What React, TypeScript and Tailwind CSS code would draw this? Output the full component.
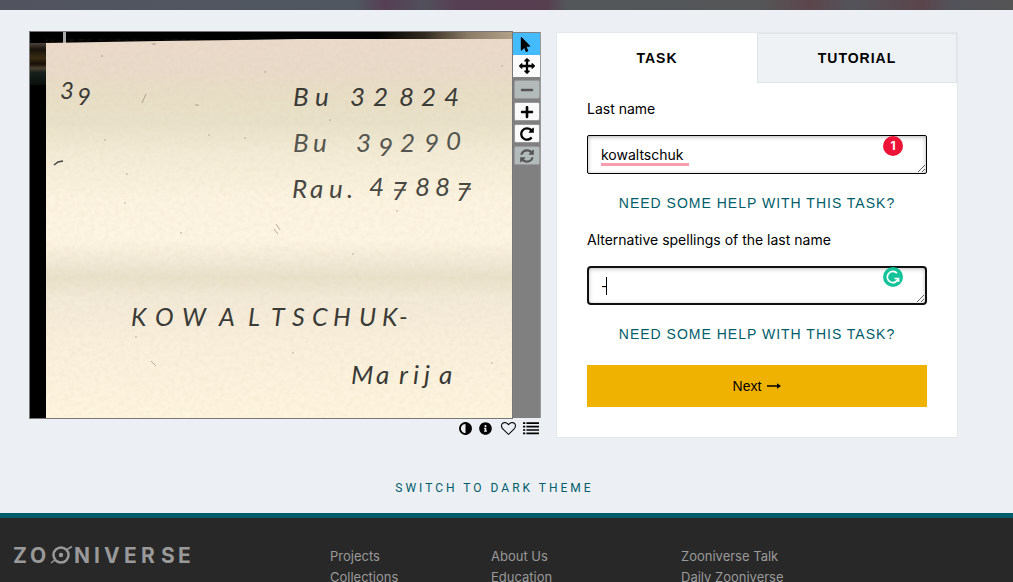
import React, { useState } from 'react';
import {
    FaFacebookF,
    FaGooglePlusG,
    FaInfoCircle,
    FaMinus,
    FaMousePointer,
    FaPlus,
    FaTwitter,
} from 'react-icons/fa';

const icons = {
    move: 'M1792 896q0 26-19 45l-256 256q-19 19-45 19t-45-19-19-45v-128h-384v384h128q26 0 45 19t19 45-19 45l-256 256q-19 19-45 19t-45-19l-256-256q-19-19-19-45t19-45 45-19h128v-384h-384v128q0 26-19 45t-45 19-45-19l-256-256q-19-19-19-45t19-45l256-256q19-19 45-19t45 19 19 45v128h384v-384h-128q-26 0-45-19t-19-45 19-45l256-256q19-19 45-19t45 19l256 256q19 19 19 45t-19 45-45 19h-128v384h384v-128q0-26 19-45t45-19 45 19l256 256q19 19 19 45z',
    rotate: 'M1664 256v448q0 26-19 45t-45 19h-448q-42 0-59-40-17-39 14-69l138-138q-148-137-349-137-104 0-198.5 40.5t-163.5 109.5-109.5 163.5-40.5 198.5 40.5 198.5 109.5 163.5 163.5 109.5 198.5 40.5q119 0 225-52t179-147q7-10 23-12 15 0 25 9l137 138q9 8 9.5 20.5t-7.5 22.5q-109 132-264 204.5t-327 72.5q-156 0-298-61t-245-164-164-245-61-298 61-298 164-245 245-164 298-61q147 0 284.5 55.5t244.5 156.5l130-129q29-31 70-14 39 17 39 59z',
    refresh:
        'M1639 1056q0 5-1 7-64 268-268 434.5t-478 166.5q-146 0-282.5-55t-243.5-157l-129 129q-19 19-45 19t-45-19-19-45v-448q0-26 19-45t45-19h448q26 0 45 19t19 45-19 45l-137 137q71 66 161 102t187 36q134 0 250-65t186-179q11-17 53-117 8-23 30-23h192q13 0 22.5 9.5t9.5 22.5zm25-800v448q0 26-19 45t-45 19h-448q-26 0-45-19t-19-45 19-45l138-138q-148-137-349-137-134 0-250 65t-186 179q-11 17-53 117-8 23-30 23h-199q-13 0-22.5-9.5t-9.5-22.5v-7q65-268 270-434.5t480-166.5q146 0 284 55.5t245 156.5l130-129q19-19 45-19t45 19 19 45z',
    contrast:
        'M896 1440v-1088q-148 0-273 73t-198 198-73 273 73 273 198 198 273 73zm768-544q0 209-103 385.5t-279.5 279.5-385.5 103-385.5-103-279.5-279.5-103-385.5 103-385.5 279.5-279.5 385.5-103 385.5 103 279.5 279.5 103 385.5z',
    heart: 'M1664 596q0-81-21.5-143t-55-98.5-81.5-59.5-94-31-98-8-112 25.5-110.5 64-86.5 72-60 61.5q-18 22-49 22t-49-22q-24-28-60-61.5t-86.5-72-110.5-64-112-25.5-98 8-94 31-81.5 59.5-55 98.5-21.5 143q0 168 187 355l581 560 580-559q188-188 188-356zm128 0q0 221-229 450l-623 600q-18 18-44 18t-44-18l-624-602q-10-8-27.5-26t-55.5-65.5-68-97.5-53.5-121-23.5-138q0-220 127-344t351-124q62 0 126.5 21.5t120 58 95.5 68.5 76 68q36-36 76-68t95.5-68.5 120-58 126.5-21.5q224 0 351 124t127 344z',
    list: 'M0 256h256v192H0zM0 640h256v192H0zM0 1024h256v192H0zM0 1408h256v192H0zM384 256h1408v192H384zM384 640h1408v192H384zM384 1024h1408v192H384zM384 1408h1408v192H384z',
};

function Icon({ name, className }: { name: keyof typeof icons; className: string }) {
    return (
        <svg viewBox="0 0 1792 1792" fill="currentColor" className={className}>
            <path d={icons[name]} />
        </svg>
    );
}

// Specks on the card: x, y, length
const specks = [
    [72, 24, 1],
    [124, 12, 2],
    [167, 73, 2],
    [179, 103, 1],
    [215, 106, 1],
    [75, 108, 1],
    [97, 142, 1],
    [95, 171, 1],
    [151, 201, 1],
    [106, 305, 1],
    [235, 40, 1],
    [300, 88, 1],
    [367, 179, 1],
    [323, 222, 1],
    [462, 331, 1],
    [263, 321, 1],
    [472, 34, 1],
];

function CardScan() {
    return (
        <svg viewBox="0 0 482 386" className="block w-full" role="img" aria-label="Index card">
            <defs>
                <linearGradient id="paper" x1="0" y1="0" x2="0" y2="1">
                    <stop offset="0" stopColor="#ebdaca" />
                    <stop offset="0.08" stopColor="#e9dac9" />
                    <stop offset="0.15" stopColor="#e8dec6" />
                    <stop offset="0.22" stopColor="#e8e1c9" />
                    <stop offset="0.3" stopColor="#f3ebd5" />
                    <stop offset="0.42" stopColor="#fcf3e0" />
                    <stop offset="0.53" stopColor="#fdf4e2" />
                    <stop offset="0.6" stopColor="#efe7d3" />
                    <stop offset="0.63" stopColor="#e9e1ca" />
                    <stop offset="0.68" stopColor="#f2e9d7" />
                    <stop offset="0.8" stopColor="#f9efdb" />
                    <stop offset="1" stopColor="#fef5df" />
                </linearGradient>
                <linearGradient id="edge" x1="0" y1="0" x2="1" y2="0">
                    <stop offset="0.72" stopColor="#000" />
                    <stop offset="0.82" stopColor="#332a20" />
                    <stop offset="0.91" stopColor="#8b7c68" />
                    <stop offset="1" stopColor="#b2a187" />
                </linearGradient>
                <linearGradient id="fringe" x1="0" y1="0" x2="0" y2="1">
                    <stop offset="0" stopColor="#4b443d" />
                    <stop offset="0.15" stopColor="#17120c" />
                    <stop offset="0.35" stopColor="#3a2b12" />
                    <stop offset="0.5" stopColor="#171008" />
                    <stop offset="0.6" stopColor="#4a4030" />
                    <stop offset="0.7" stopColor="#17201b" />
                    <stop offset="1" stopColor="#0a0f0c" />
                </linearGradient>
                <filter id="grain" x="0" y="0" width="1" height="1">
                    <feTurbulence type="fractalNoise" baseFrequency="0.2" numOctaves="3" />
                    <feColorMatrix values="0 0 0 0 0.6  0 0 0 0 0.5  0 0 0 0 0.3  0.5 0 0 0 -0.18" />
                </filter>
            </defs>
            <rect width="482" height="386" fill="#000" />
            <rect width="482" height="14" fill="url(#edge)" />
            <rect y="11" width="16" height="42" fill="url(#fringe)" />
            <rect x="33" width="3" height="12" fill="#aaa" />
            <path d="M16 11 130 9 270 7H482V386H16Z" fill="url(#paper)" />
            <path d="M16 11 130 9 270 7H482V386H16Z" filter="url(#grain)" opacity="0.4" />
            {specks.map(([x, y, r]) => (
                <ellipse key={`${x}-${y}`} cx={x} cy={y} rx={r} ry="1" fill="#8d8069" opacity="0.4" />
            ))}
            <path d="M24 133l4-3 5-1" fill="none" stroke="#444" strokeWidth="1.5" />
            <path d="M112 71l4-9M121 329l5 5M246 192l4 6M244 197l4 5" fill="none" stroke="#8a7c6c" opacity="0.6" />
            <g className="font-['Lato','Liberation_Sans',sans-serif] italic" fill="#3a3a36">
                <text x="30 47" y="67 73" fontSize="24">
                    39
                </text>
                <text x="263 285 320 343 369 391 414" y="74" fontSize="26">
                    Bu32824
                </text>
                <text x="263 283 326 348 370 394 416" y="120 120 120 124 120 120 118" fontSize="26" fill="#565650">
                    Bu39290
                </text>
                <text
                    x="262 280 299 317 339 362 385 405 426"
                    y="166 166 166 166 164 168 164 164 169"
                    fontSize="26"
                    fill="#484843"
                >
                    Rau.47887
                </text>
                <path d="M364 158h12M429 157h12" fill="none" stroke="#484843" strokeWidth="1.5" />
                <text x="101 125 152 189 218 241 262 282 303 329 352 369" y="294" fontSize="25">
                    KOWALTSCHUK-
                </text>
                <text x="321 346 369 383 394 409" y="352" fontSize="26">
                    Marija
                </text>
            </g>
        </svg>
    );
}

function ImageToolbar() {
    const button = 'flex h-[19px] w-[26px] items-center justify-center rounded-xs border border-[#999]';

    return (
        <div className="mt-px mb-px flex w-7 flex-col items-center gap-[3px] border-r border-[#999] bg-[#808080] pt-px">
            <div className="flex flex-col">
                <button aria-label="Annotate" className="flex h-[22px] w-[27px] items-center justify-center bg-[#43bbfd]">
                    <FaMousePointer className="mr-[3px] h-[15px] w-[15px]" />
                </button>
                <button aria-label="Move" className="flex h-[22px] w-[27px] items-center justify-center bg-[#fafafa]">
                    <Icon name="move" className="h-4 w-4" />
                </button>
            </div>
            <button disabled aria-label="Zoom out" className={`${button} bg-[#b3baba] text-[#555]`}>
                <FaMinus className="h-[14px] w-[14px]" />
            </button>
            <button aria-label="Zoom in" className={`${button} bg-[#fafafa]`}>
                <FaPlus className="h-[14px] w-[14px]" />
            </button>
            <button aria-label="Rotate" className={`${button} bg-[#fafafa]`}>
                <Icon name="rotate" className="h-4 w-4" />
            </button>
            <button disabled aria-label="Reset" className={`${button} bg-[#b3baba] text-[#555]`}>
                <Icon name="refresh" className="h-4 w-4" />
            </button>
        </div>
    );
}

function HelpButton() {
    return (
        <button className="block w-full text-center font-['Liberation_Sans',Arial,sans-serif] text-sm leading-5 tracking-[1px] text-[#005d69]">
            NEED SOME HELP WITH THIS TASK?
        </button>
    );
}

function TaskPanel() {
    const [lastName, setLastName] = useState('kowaltschuk');
    const [spellings, setSpellings] = useState('-');

    return (
        <section className="mt-px w-[402px] shrink-0 border border-[#e4e8eb] bg-white">
            <div
                role="tablist"
                className="grid h-[50px] grid-cols-2 font-['Liberation_Sans',Arial,sans-serif] text-sm font-bold tracking-[1px]"
            >
                <button role="tab" aria-selected="true">
                    TASK
                </button>
                <button role="tab" aria-selected="false" className="border border-[#dfe4e8] bg-[#eef2f5]">
                    TUTORIAL
                </button>
            </div>

            <div className="px-[30px] pt-4 pb-[30px]">
                <label htmlFor="lastName" className="block text-sm leading-5">
                    Last name
                </label>
                <div className="relative mt-4">
                    <textarea
                        id="lastName"
                        rows={1}
                        spellCheck={false}
                        value={lastName}
                        onChange={(e) => setLastName(e.target.value)}
                        className="block h-[39px] w-full overflow-hidden rounded-xs border border-black px-[13px] py-[9px] text-sm leading-5 shadow-[inset_0_1px_4px_rgba(0,0,0,0.3)] outline-none"
                    />
                    <span className="absolute top-[28px] left-[14px] h-[3px] w-[88px] bg-[#f79bae]" />
                    <span className="absolute top-px right-6 flex h-5 w-5 items-center justify-center rounded-full bg-[#ec1337] text-xs font-bold text-white">
                        1
                    </span>
                </div>
                <div className="mt-[19px]">
                    <HelpButton />
                </div>

                <label htmlFor="spellings" className="mt-[17px] block text-sm leading-5">
                    Alternative spellings of the last name
                </label>
                <div className="relative mt-4">
                    <textarea
                        id="spellings"
                        rows={1}
                        spellCheck={false}
                        value={spellings}
                        onChange={(e) => setSpellings(e.target.value)}
                        className="block h-[39px] w-full overflow-hidden rounded border-2 border-[#101010] px-3 py-2 text-sm leading-5 shadow-[inset_0_1px_4px_rgba(0,0,0,0.25)] outline-none"
                    />
                    <span className="absolute top-[11px] left-[19px] h-[18px] w-px bg-black" />
                    <svg viewBox="0 0 20 20" className="absolute top-px right-6 h-5 w-5">
                        <circle cx="10" cy="10" r="10" fill="#15c39a" />
                        <path
                            d="M14 6.2A5.6 5.6 0 1 0 15.3 11.5H11.5M15.5 11.5V15"
                            fill="none"
                            stroke="#fff"
                            strokeWidth="1.7"
                        />
                    </svg>
                </div>
                <div className="mt-[19px]">
                    <HelpButton />
                </div>

                <button className="mt-[21px] flex h-[42px] w-full items-center justify-center gap-[6px] bg-[#f0b200] font-['Liberation_Sans',Arial,sans-serif] text-sm">
                    Next
                    <svg viewBox="0 0 14 8" className="h-2 w-[14px]">
                        <path d="M0 3.2H10V1.2L14 4 10 6.8V4.8H0Z" />
                    </svg>
                </button>
            </div>
        </section>
    );
}

function Logo() {
    return (
        <svg viewBox="0 0 180 28" className="h-7 w-[180px] overflow-visible" role="img" aria-label="Zooniverse" fill="#999">
            <g className="font-['Inter','Liberation_Sans',sans-serif]" fontWeight="700" fontSize="21">
                <text x="-1 16" y="22">
                    ZO
                </text>
                <text x="60 80 90 110 127 147 164" y="22">
                    NIVERSE
                </text>
            </g>
            <circle cx="47" cy="14" r="7.5" fill="none" stroke="#999" strokeWidth="2.5" />
            <circle cx="47" cy="14" r="2.2" />
            <path d="M37 22 41.5 18.500M53 8.500 58 5.500" stroke="#999" strokeWidth="1.5" />
        </svg>
    );
}

const footerLinks = [
    ['Projects', 'Collections'],
    ['About Us', 'Education'],
    ['Zooniverse Talk', 'Daily Zooniverse'],
];

function Footer() {
    return (
        <footer className="grid min-h-0 flex-1 grid-cols-[316px_161px_190px_1fr] overflow-hidden border-t-[5px] border-[#005d69] bg-[#282828] pt-[28px] pr-[73px] pl-[14px] text-[13px] leading-[21px] text-[#999]">
            <a href="#" className="-mt-[5px]">
                <Logo />
            </a>
            {footerLinks.map((links) => (
                <ul key={links[0]}>
                    {links.map((link) => (
                        <li key={link}>
                            <a href="#">{link}</a>
                        </li>
                    ))}
                </ul>
            ))}
            <div className="flex h-5 items-center justify-end gap-[15px]">
                <a href="#" aria-label="Facebook">
                    <FaFacebookF className="h-[14px] w-[14px]" />
                </a>
                <a href="#" aria-label="Twitter">
                    <FaTwitter className="ml-[3px] h-[13px] w-[13px]" />
                </a>
                <a href="#" aria-label="Google Plus">
                    <FaGooglePlusG className="h-[19px] w-[19px]" />
                </a>
            </div>
        </footer>
    );
}

function App() {
    return (
        <div className="flex h-screen flex-col overflow-hidden bg-[#ecf0f5] font-['Inter','Liberation_Sans',sans-serif] text-black">
            <div className="h-[10px] shrink-0 bg-[linear-gradient(90deg,#51545e_0%,#505760_35%,#563f55_38%,#51505b_42%,#573f53_45%,#573f50_54%,#53575a_56%,#545657_75%,#5c464c_80%,#53545a_84%,#5a454b_91%,#52535a_94%,#545454_100%)]" />

            <main className="flex items-start gap-[15px] pt-[21px] pr-[55px] pl-[29px]">
                <div className="min-w-0 flex-1">
                    <div className="flex">
                        <div className="min-w-0 flex-1 border border-[#777]">
                            <CardScan />
                        </div>
                        <ImageToolbar />
                    </div>
                    <div className="flex h-[18px] items-center justify-end gap-[6px] pr-[2px]">
                        <button aria-label="Invert colours">
                            <Icon name="contrast" className="h-[15px] w-[15px]" />
                        </button>
                        <button aria-label="Subject information">
                            <FaInfoCircle className="h-[13px] w-[13px]" />
                        </button>
                        <button aria-label="Add to favourites" className="ml-[3px]">
                            <Icon name="heart" className="h-[15px] w-[15px]" />
                        </button>
                        <button aria-label="Add to collection" className="ml-px">
                            <Icon name="list" className="h-4 w-4" />
                        </button>
                    </div>
                </div>
                <TaskPanel />
            </main>

            <button className="mt-10 mb-[15px] mr-[24px] self-center font-['Roboto','Liberation_Sans',sans-serif] text-xs leading-5 tracking-[3px] text-[#005d69]">
                SWITCH TO DARK THEME
            </button>

            <Footer />
        </div>
    );
}

export default App;
